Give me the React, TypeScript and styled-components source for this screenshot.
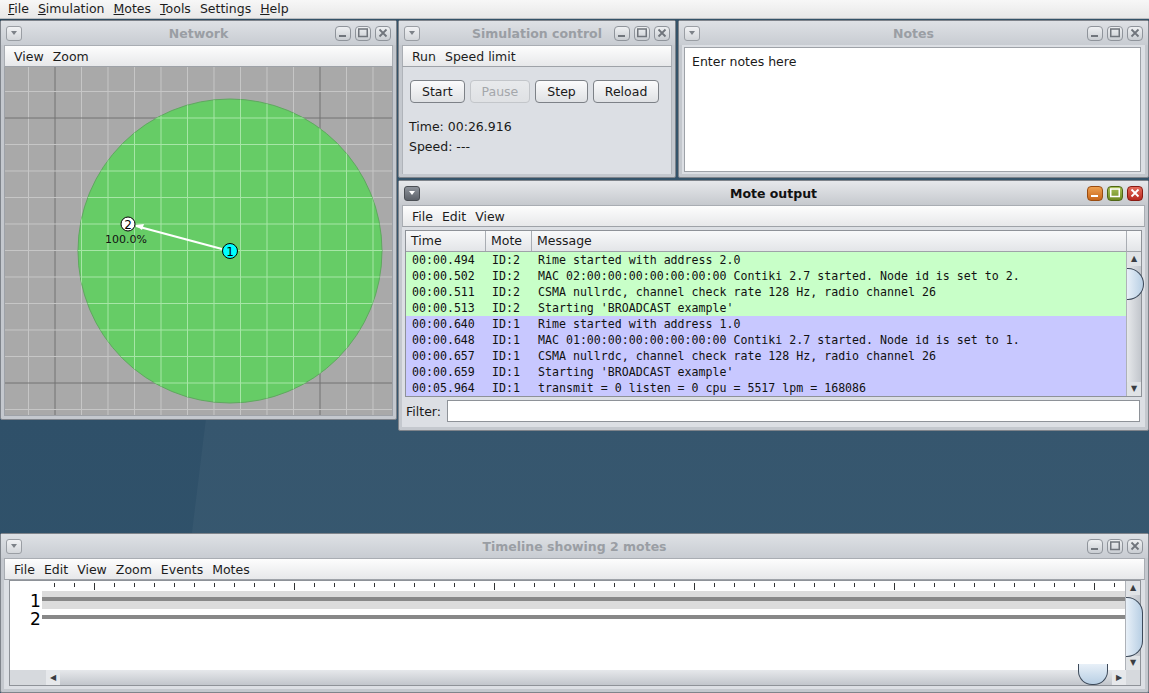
import styled, { createGlobalStyle, css } from "styled-components";

const GlobalStyle = createGlobalStyle`
  html, body {
    margin: 0;
    padding: 0;
    background: #2f5069;
  }
  body {
    font-family: "DejaVu Sans", "Liberation Sans", sans-serif;
    font-size: 12px;
    color: #1a1a1a;
  }
`;

const colors = {
  frame: "#c4c8ce",
  frameDark: "#7f848b",
  content: "#dcdfe4",
  titleText: "#9a9ea4",
  green: "#c8ffc8",
  blue: "#c8c8ff",
};

interface Row {
  time: string;
  mote: string;
  msg: string;
}

const rows: Row[] = [
  { time: "00:00.494", mote: "ID:2", msg: "Rime started with address 2.0" },
  { time: "00:00.502", mote: "ID:2", msg: "MAC 02:00:00:00:00:00:00:00 Contiki 2.7 started. Node id is set to 2." },
  { time: "00:00.511", mote: "ID:2", msg: "CSMA nullrdc, channel check rate 128 Hz, radio channel 26" },
  { time: "00:00.513", mote: "ID:2", msg: "Starting 'BROADCAST example'" },
  { time: "00:00.640", mote: "ID:1", msg: "Rime started with address 1.0" },
  { time: "00:00.648", mote: "ID:1", msg: "MAC 01:00:00:00:00:00:00:00 Contiki 2.7 started. Node id is set to 1." },
  { time: "00:00.657", mote: "ID:1", msg: "CSMA nullrdc, channel check rate 128 Hz, radio channel 26" },
  { time: "00:00.659", mote: "ID:1", msg: "Starting 'BROADCAST example'" },
  { time: "00:05.964", mote: "ID:1", msg: "transmit = 0 listen = 0 cpu = 5517 lpm = 168086" },
];

function Caret({ dark }: { dark?: boolean }) {
  return (
    <svg width="8" height="6" viewBox="0 0 8 6">
      <path d="M1 1 L7 1 L4 5 Z" fill={dark ? "#fff" : "#7d8288"} />
    </svg>
  );
}

type Kind = "min" | "max" | "close";

function FrameIcon({ kind, color }: { kind: Kind; color: string }) {
  if (kind === "min")
    return (
      <svg width="10" height="10" viewBox="0 0 10 10">
        <rect x="1" y="7" width="7" height="2" fill={color} />
      </svg>
    );
  if (kind === "max")
    return (
      <svg width="10" height="10" viewBox="0 0 10 10">
        <rect x="0.75" y="1" width="8.5" height="7.5" fill="none" stroke={color} strokeWidth="1.5" />
      </svg>
    );
  return (
    <svg width="10" height="10" viewBox="0 0 10 10">
      <path d="M1.5 1.5 L8.5 8.5 M8.5 1.5 L1.5 8.5" stroke={color} strokeWidth="1.8" />
    </svg>
  );
}

interface WinProps {
  title: string;
  active?: boolean;
  x: number;
  y: number;
  w: number;
  h: number;
  menu?: string[];
  children?: React.ReactNode;
}

function InternalFrame({ title, active, x, y, w, h, menu, children }: WinProps) {
  return (
    <Frame style={{ left: x, top: y, width: w, height: h }}>
      <TitleBar $active={active}>
        <DropButton $active={active}>
          <Caret dark={active} />
        </DropButton>
        <TitleText $active={active}>{title}</TitleText>
        <Controls>
          {(["min", "max", "close"] as Kind[]).map((k) => (
            <CtrlButton key={k} $kind={k} $active={active}>
              <FrameIcon kind={k} color={active ? "#fff" : "#70757c"} />
            </CtrlButton>
          ))}
        </Controls>
      </TitleBar>
      {menu ? (
        <WinMenu>
          {menu.map((m) => (
            <span key={m}>{m}</span>
          ))}
        </WinMenu>
      ) : null}
      <Body>{children}</Body>
    </Frame>
  );
}

function NetworkCanvas() {
  const W = 389;
  const H = 348;
  const step = 26.5;
  const x0 = 50 - step * 2;
  const y0 = 51 - step * 2;
  const vx: number[] = [];
  for (let i = 0; x0 + i * step < W; i++) vx.push(x0 + i * step);
  const hy: number[] = [];
  for (let i = 0; y0 + i * step < H; i++) hy.push(y0 + i * step);
  return (
    <svg width={W} height={H} viewBox={`0 0 ${W} ${H}`} style={{ display: "block" }}>
      <defs>
        <clipPath id="range">
          <circle cx="225" cy="184" r="152" />
        </clipPath>
      </defs>
      <rect width={W} height={H} fill="#a9a9a9" />
      {vx.map((x, i) => (
        <line key={`v${i}`} x1={x} y1={0} x2={x} y2={H} stroke={i % 10 === 2 ? "#727272" : "#c6c6c6"} strokeWidth="1" />
      ))}
      {hy.map((y, i) => (
        <line key={`h${i}`} x1={0} y1={y} x2={W} y2={y} stroke={i % 10 === 2 ? "#727272" : "#c6c6c6"} strokeWidth="1" />
      ))}
      <circle cx="225" cy="184" r="152" fill="#66cc66" stroke="#5fa85f" strokeWidth="1" />
      <g clipPath="url(#range)">
        {vx.map((x, i) => (
          <line key={`gv${i}`} x1={x} y1={0} x2={x} y2={H} stroke="#a6e6a6" strokeWidth="1" />
        ))}
        {hy.map((y, i) => (
          <line key={`gh${i}`} x1={0} y1={y} x2={W} y2={y} stroke="#a6e6a6" strokeWidth="1" />
        ))}
      </g>
      <line x1="217" y1="182" x2="131" y2="159" stroke="#fff" strokeWidth="2" />
      <path d="M130 158 L139 157 L137 163 Z" fill="#fff" />
      <circle cx="123" cy="157" r="7" fill="#fff" stroke="#000" strokeWidth="1" />
      <text x="123" y="161.5" fontSize="12" textAnchor="middle" fontFamily="DejaVu Sans" fill="#000">2</text>
      <text x="100" y="176" fontSize="11" fontFamily="DejaVu Sans" fill="#111">100.0%</text>
      <circle cx="225" cy="184" r="7.5" fill="#00ffff" stroke="#000" strokeWidth="1" />
      <text x="225" y="188.5" fontSize="12" textAnchor="middle" fontFamily="DejaVu Sans" fill="#000">1</text>
    </svg>
  );
}

function Ruler() {
  const ticks: number[] = [];
  for (let x = 44; x < 1118; x += 20) ticks.push(x);
  return (
    <svg width="1118" height="9" style={{ display: "block" }}>
      {ticks.map((x, i) => (
        <line key={i} x1={x + 0.5} y1={1} x2={x + 0.5} y2={i % 10 === 2 ? 8 : 5} stroke="#333" strokeWidth="1" />
      ))}
    </svg>
  );
}

export default function App() {
  return (
    <>
      <GlobalStyle />
      <Desktop>
        <MainMenu>
          <span><u>F</u>ile</span>
          <span><u>S</u>imulation</span>
          <span><u>M</u>otes</span>
          <span><u>T</u>ools</span>
          <span>Settings</span>
          <span><u>H</u>elp</span>
        </MainMenu>

        <InternalFrame title="Network" x={0} y={20} w={397} h={400} menu={["View", "Zoom"]}>
          <CanvasWrap>
            <NetworkCanvas />
          </CanvasWrap>
        </InternalFrame>

        <InternalFrame title="Simulation control" x={398} y={20} w={278} h={158} menu={["Run", "Speed limit"]}>
          <ControlPanel>
            <ButtonRow>
              <PushButton>Start</PushButton>
              <PushButton disabled>Pause</PushButton>
              <PushButton>Step</PushButton>
              <PushButton>Reload</PushButton>
            </ButtonRow>
            <InfoLine>Time: 00:26.916</InfoLine>
            <InfoLine>Speed: ---</InfoLine>
          </ControlPanel>
        </InternalFrame>

        <InternalFrame title="Notes" x={678} y={20} w={471} h={158}>
          <NotesArea>Enter notes here</NotesArea>
        </InternalFrame>

        <InternalFrame title="Mote output" active x={398} y={180} w={751} h={251} menu={["File", "Edit", "View"]}>
          <OutputBody>
            <TableBox>
              <TableMain>
                <HeaderRow>
                  <HeadCell $w={80}>Time</HeadCell>
                  <HeadCell $w={46}>Mote</HeadCell>
                  <HeadCell $w={594}>Message</HeadCell>
                </HeaderRow>
                {rows.map((r) => (
                  <DataRow key={r.time} $bg={r.mote === "ID:2" ? colors.green : colors.blue}>
                    <Cell $w={80}>{r.time}</Cell>
                    <Cell $w={46}>{r.mote}</Cell>
                    <Cell $w={594}>{r.msg}</Cell>
                  </DataRow>
                ))}
              </TableMain>
              <VScroll>
                <HeaderCorner />
                <ScrollArrow>▲</ScrollArrow>
                <ScrollTrack>
                  <Thumb $top={2} $len={30} />
                </ScrollTrack>
                <ScrollArrow>▼</ScrollArrow>
              </VScroll>
            </TableBox>
            <FilterRow>
              <span>Filter:</span>
              <FilterInput />
            </FilterRow>
          </OutputBody>
        </InternalFrame>

        <InternalFrame
          title="Timeline showing 2 motes"
          x={0}
          y={533}
          w={1149}
          h={160}
          menu={["File", "Edit", "View", "Zoom", "Events", "Motes"]}
        >
          <TimelineBody>
            <TimelineMain>
              <TimelineCanvas>
                <Ruler />
                <MoteTrack $shade>
                  <MoteLabel>1</MoteLabel>
                  <TrackLine />
                </MoteTrack>
                <MoteTrack>
                  <MoteLabel>2</MoteLabel>
                  <TrackLine />
                </MoteTrack>
              </TimelineCanvas>
              <VScroll>
                <ScrollArrow>▲</ScrollArrow>
                <ScrollTrack>
                  <Thumb $top={2} $len={58} />
                </ScrollTrack>
                <ScrollArrow>▼</ScrollArrow>
              </VScroll>
            </TimelineMain>
            <HScroll>
              <HLead />
              <HArrow>◀</HArrow>
              <HTrack>
                <HThumb />
              </HTrack>
              <HArrow>▶</HArrow>
              <HCorner />
            </HScroll>
          </TimelineBody>
        </InternalFrame>
      </Desktop>
    </>
  );
}

const Desktop = styled.div`
  position: relative;
  width: 1149px;
  height: 693px;
  overflow: hidden;
  background:
    linear-gradient(97deg, transparent 0 255px, rgba(255, 255, 255, 0.035) 256px 100%),
    linear-gradient(120deg, rgba(0, 0, 0, 0.05) 0 60px, transparent 61px),
    linear-gradient(180deg, #2d4c62 0%, #2f5069 60%, #30536b 100%);
`;

const MainMenu = styled.div`
  display: flex;
  gap: 9px;
  height: 16px;
  padding: 0 0 2px 8px;
  align-items: center;
  background: linear-gradient(#f7f7f7, #e8e8e8);
  border-bottom: 1px solid #b9bcc0;
  font-size: 12.5px;
  color: #1c1c1c;
`;

const Frame = styled.div`
  position: absolute;
  box-sizing: border-box;
  display: flex;
  flex-direction: column;
  background: ${colors.frame};
  border: 1px solid ${colors.frameDark};
  border-radius: 2px;
  padding: 0 3px 3px;
`;

const TitleBar = styled.div<{ $active?: boolean }>`
  position: relative;
  display: flex;
  align-items: center;
  height: 24px;
  margin: 0 -3px;
  padding: 0 5px;
  background: ${(p) =>
    p.$active
      ? "linear-gradient(#e6e8eb, #c6c9ce)"
      : "linear-gradient(#dee1e5, #c8ccd2)"};
  flex-shrink: 0;
`;

const DropButton = styled.div<{ $active?: boolean }>`
  width: 16px;
  height: 15px;
  border-radius: 3px;
  box-sizing: border-box;
  display: flex;
  align-items: center;
  justify-content: center;
  ${(p) =>
    p.$active
      ? css`
          background: linear-gradient(#8e939b, #5c6169);
          border: 1px solid #4b4f55;
        `
      : css`
          background: linear-gradient(#f1f2f4, #d3d6da);
          border: 1px solid #9a9ea4;
        `}
`;

const TitleText = styled.div<{ $active?: boolean }>`
  position: absolute;
  left: 0;
  right: 0;
  text-align: center;
  font-weight: bold;
  font-size: 12.5px;
  pointer-events: none;
  color: ${(p) => (p.$active ? "#111" : colors.titleText)};
`;

const Controls = styled.div`
  margin-left: auto;
  display: flex;
  gap: 4px;
  position: relative;
`;

const ctrlColors: Record<Kind, [string, string, string]> = {
  min: ["#eea050", "#c8661a", "#9a4c10"],
  max: ["#a8c25a", "#6d8a22", "#4f6616"],
  close: ["#e46a5a", "#b8281e", "#8a1a12"],
};

const CtrlButton = styled.div<{ $kind: Kind; $active?: boolean }>`
  width: 16px;
  height: 15px;
  border-radius: 4px;
  box-sizing: border-box;
  display: flex;
  align-items: center;
  justify-content: center;
  ${(p) =>
    p.$active
      ? css`
          background: linear-gradient(${ctrlColors[p.$kind][0]}, ${ctrlColors[p.$kind][1]});
          border: 1px solid ${ctrlColors[p.$kind][2]};
        `
      : css`
          background: linear-gradient(#eef0f2, #c9cdd2);
          border: 1px solid #8f949b;
        `}
`;

const WinMenu = styled.div`
  display: flex;
  gap: 9px;
  align-items: center;
  height: 22px;
  padding: 0 9px;
  flex-shrink: 0;
  box-sizing: border-box;
  background: linear-gradient(#fdfdfd, #e7e8ea);
  border: 1px solid #a9adb3;
  border-bottom-color: #9ea2a8;
  font-size: 12.5px;
  color: #1c1c1c;
`;

const Body = styled.div`
  flex: 1;
  display: flex;
  flex-direction: column;
  min-height: 0;
  background: ${colors.content};
`;

const CanvasWrap = styled.div`
  flex: 1;
  border: 1px solid #9ea2a8;
  border-top: none;
  overflow: hidden;
  background: #a9a9a9;
`;

const ControlPanel = styled.div`
  display: flex;
  flex-direction: column;
  padding: 13px 7px 0 7px;
  border-left: 1px solid #b0b4ba;
  border-right: 1px solid #b0b4ba;
  flex: 1;
`;

const ButtonRow = styled.div`
  display: flex;
  gap: 5px;
  margin-bottom: 14px;
`;

const PushButton = styled.button`
  height: 23px;
  padding: 0 11px;
  font-family: "DejaVu Sans", sans-serif;
  font-size: 12.5px;
  color: #1a1a1a;
  border: 1px solid #7d8187;
  border-radius: 4px;
  background: linear-gradient(#fbfbfc, #dfe1e4);

  &:disabled {
    color: #a4a7ab;
    border-color: #c3c6ca;
    background: linear-gradient(#e8eaec, #dfe1e4);
  }
`;

const InfoLine = styled.div`
  font-size: 12.5px;
  line-height: 20px;
  color: #1a1a1a;
  margin-left: -1px;
`;

const NotesArea = styled.div`
  flex: 1;
  margin: 2px 4px 2px 2px;
  padding: 6px 7px;
  background: #fff;
  border: 1px solid #9ea2a8;
  font-size: 12.5px;
  color: #1a1a1a;
`;

const OutputBody = styled.div`
  flex: 1;
  display: flex;
  flex-direction: column;
  padding: 3px 3px 0 3px;
`;

const TableBox = styled.div`
  display: flex;
  border: 1px solid #8e9298;
  background: #fff;
`;

const TableMain = styled.div`
  width: 720px;
  display: flex;
  flex-direction: column;
`;

const HeaderRow = styled.div`
  display: flex;
  height: 20px;
  background: linear-gradient(#f8f9fa, #e3e5e8);
  border-bottom: 1px solid #9ea2a8;
`;

const HeadCell = styled.div<{ $w: number }>`
  width: ${(p) => p.$w}px;
  box-sizing: border-box;
  padding-left: 5px;
  line-height: 20px;
  font-size: 12.5px;
  border-right: 1px solid #a9adb3;
  &:last-child {
    border-right: none;
  }
`;

const DataRow = styled.div<{ $bg: string }>`
  display: flex;
  height: 16px;
  background: ${(p) => p.$bg};
`;

const Cell = styled.div<{ $w: number }>`
  width: ${(p) => p.$w}px;
  box-sizing: border-box;
  padding-left: 6px;
  white-space: nowrap;
  font-family: "DejaVu Sans Mono", "Liberation Mono", monospace;
  font-size: 11.6px;
  line-height: 17px;
  color: #111;
`;

const VScroll = styled.div`
  width: 14px;
  display: flex;
  flex-direction: column;
  background: linear-gradient(90deg, #d7dadf, #c3c7cd);
  border-left: 1px solid #aeb2b8;
`;

const HeaderCorner = styled.div`
  height: 20px;
  background: linear-gradient(#f8f9fa, #e3e5e8);
  border-bottom: 1px solid #9ea2a8;
  margin-left: -1px;
  border-left: 1px solid #a9adb3;
`;

const ScrollArrow = styled.div`
  height: 14px;
  font-size: 8px;
  line-height: 14px;
  text-align: center;
  color: #3a3d42;
  background: #e0e3e6;
`;

const ScrollTrack = styled.div`
  flex: 1;
  position: relative;
  background: linear-gradient(90deg, #e6e8eb, #c2c6cc);
`;

const Thumb = styled.div<{ $top: number; $len: number }>`
  position: absolute;
  left: 0;
  right: -3px;
  top: ${(p) => p.$top}px;
  height: ${(p) => p.$len}px;
  border: 1px solid #3d4a5a;
  border-left: none;
  border-radius: 0 16px 16px 0;
  background: linear-gradient(90deg, #e8f0f8, #b8cfe4);
`;

const FilterRow = styled.div`
  display: flex;
  align-items: center;
  gap: 6px;
  height: 28px;
  padding-left: 1px;
  font-size: 12.5px;
`;

const FilterInput = styled.div`
  flex: 1;
  height: 20px;
  background: #fff;
  border: 1px solid #8e9298;
  margin-right: 2px;
`;

const TimelineBody = styled.div`
  flex: 1;
  display: flex;
  flex-direction: column;
  padding: 0 4px 3px 5px;
`;

const TimelineMain = styled.div`
  flex: 1;
  display: flex;
  border: 1px solid #8e9298;
  border-bottom: none;
  min-height: 0;
`;

const TimelineCanvas = styled.div`
  flex: 1;
  background: #fff;
  overflow: hidden;
  padding-top: 1px;
`;

const MoteTrack = styled.div<{ $shade?: boolean }>`
  position: relative;
  height: 18px;
  margin-left: 32px;
  background: ${(p) => (p.$shade ? "#dcdcdc" : "transparent")};
  display: flex;
  align-items: flex-start;
`;

const MoteLabel = styled.div`
  position: absolute;
  left: -12px;
  top: 2px;
  font-size: 17px;
  line-height: 17px;
  color: #000;
`;

const TrackLine = styled.div`
  width: 100%;
  height: 4px;
  margin-top: 6px;
  background: #888;
`;

const HScroll = styled.div`
  display: flex;
  height: 15px;
  border: 1px solid #8e9298;
  border-top: none;
  background: linear-gradient(#e4e6e9, #c5c9ce);
`;

const HLead = styled.div`
  width: 36px;
  background: #d6d9dd;
`;

const HArrow = styled.div`
  width: 14px;
  font-size: 8px;
  line-height: 15px;
  text-align: center;
  color: #3a3d42;
  background: #e6e8eb;
`;

const HTrack = styled.div`
  flex: 1;
  position: relative;
  background: linear-gradient(#e6e8eb, #c2c6cc);
`;

const HThumb = styled.div`
  position: absolute;
  right: 4px;
  top: -6px;
  width: 28px;
  height: 20px;
  border: 1px solid #3d4a5a;
  border-top: none;
  border-radius: 0 0 14px 14px;
  background: linear-gradient(#e8f0f8, #b8cfe4);
`;

const HCorner = styled.div`
  width: 14px;
  background: #d6d9dd;
`;
